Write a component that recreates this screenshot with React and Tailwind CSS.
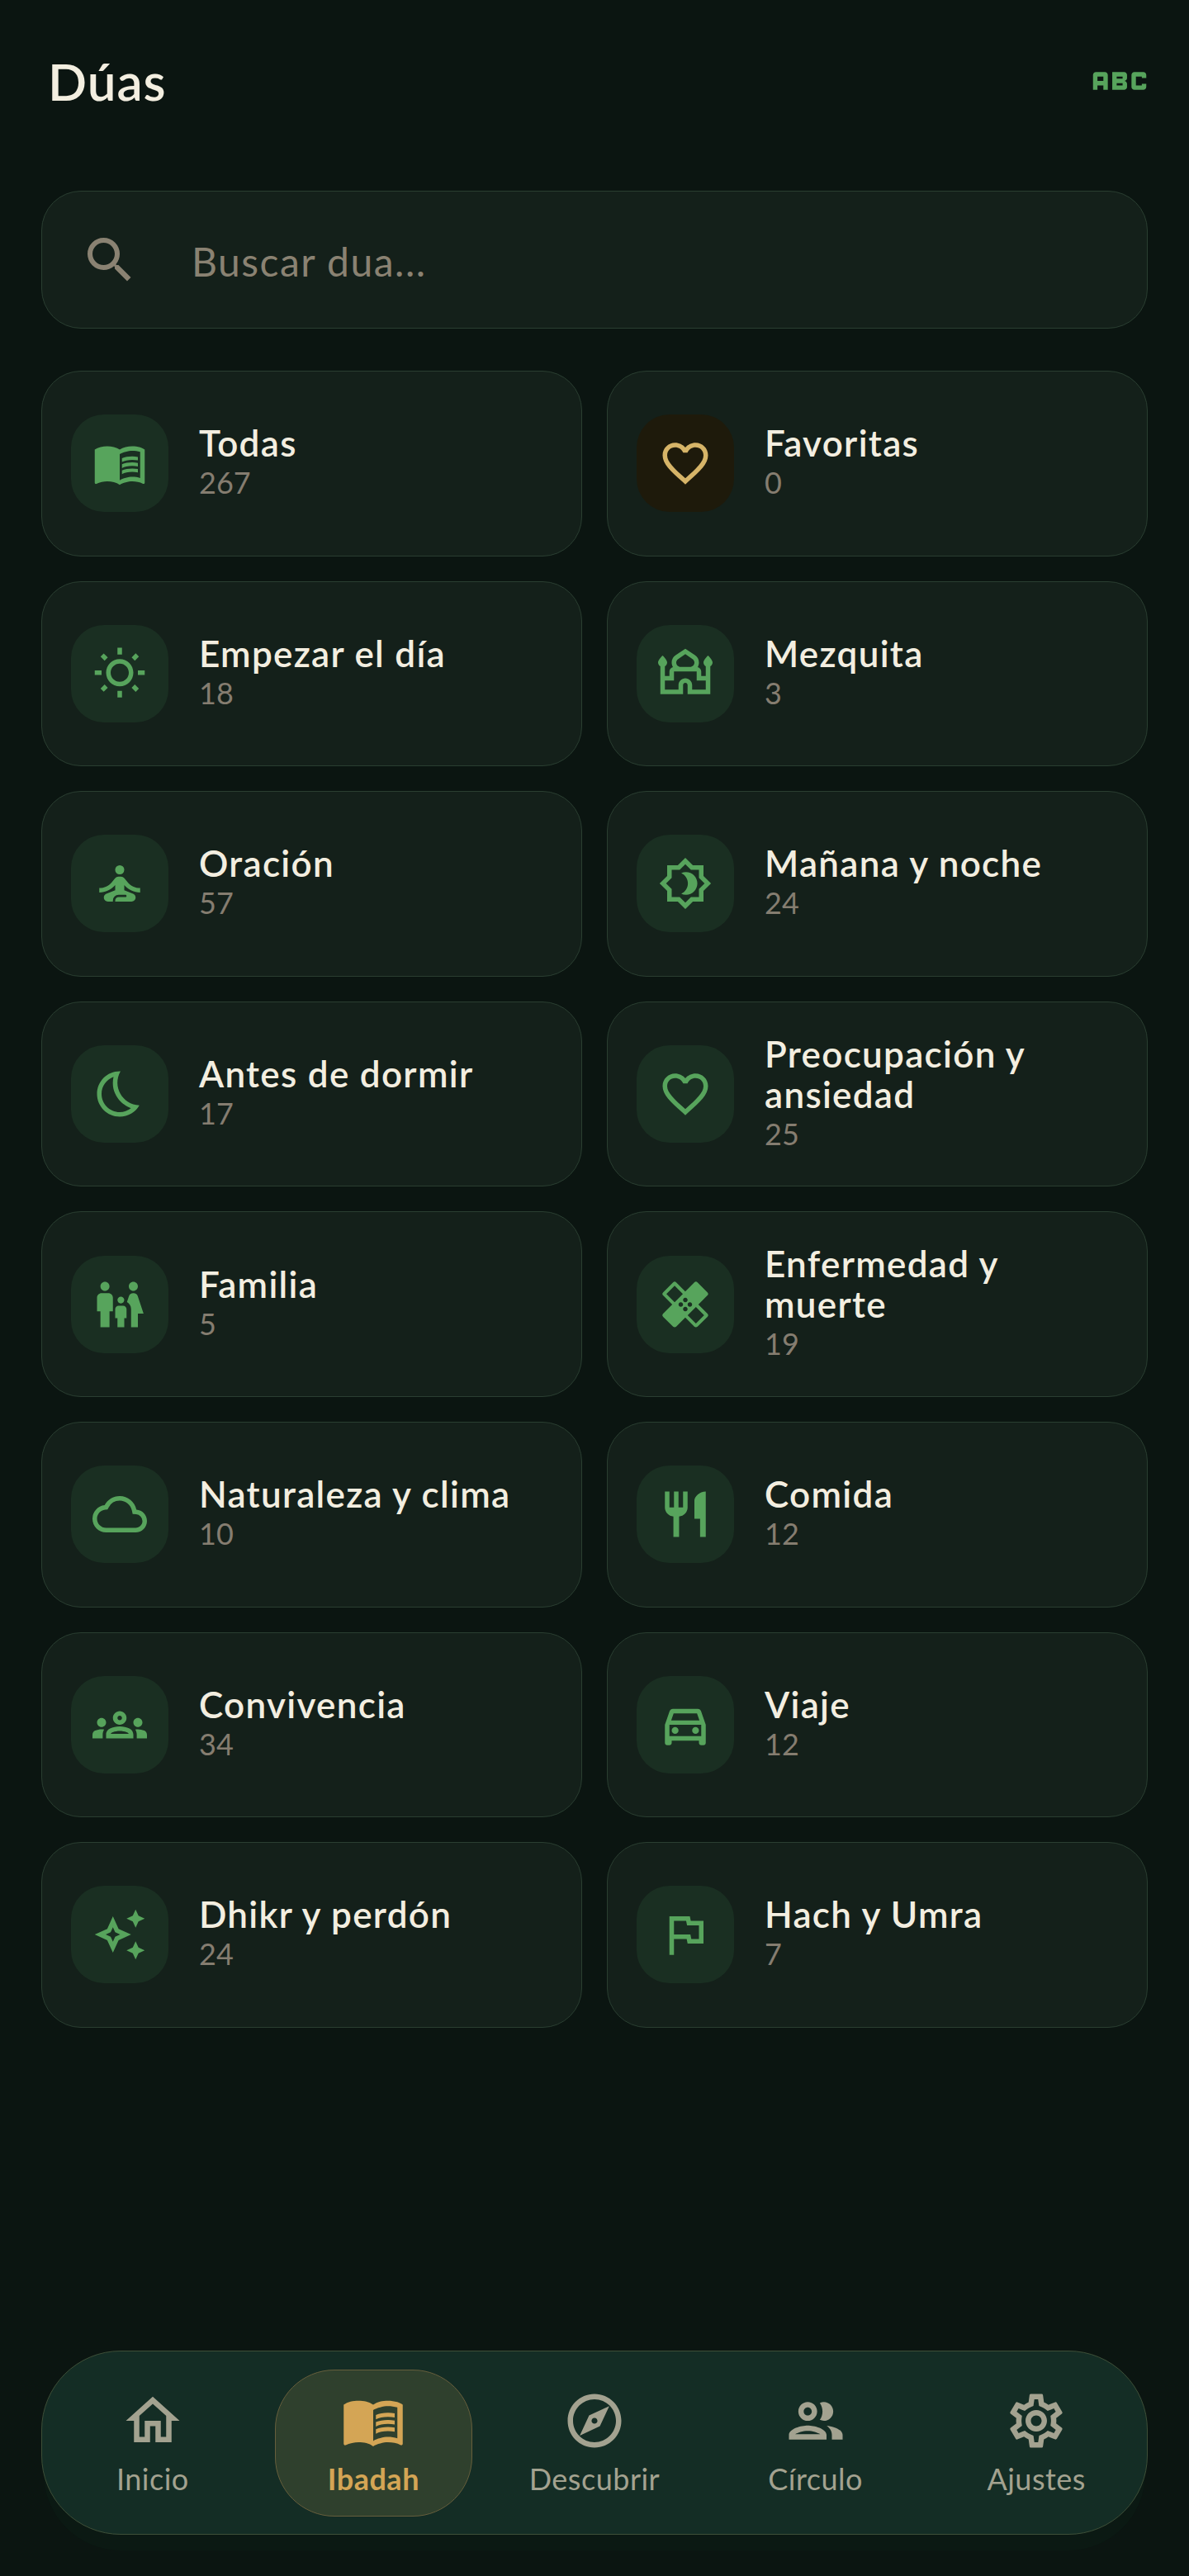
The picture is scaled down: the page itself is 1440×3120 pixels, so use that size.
import {
	MdAbc,
	MdSearch,
	MdMenuBook,
	MdFavoriteBorder,
	MdOutlineWbSunny,
	MdOutlineMosque,
	MdSelfImprovement,
	MdOutlineBrightness4,
	MdOutlineBedtime,
	MdFamilyRestroom,
	MdOutlineHealing,
	MdOutlineCloud,
	MdRestaurant,
	MdOutlineGroups,
	MdOutlineDirectionsCar,
	MdOutlineAutoAwesome,
	MdOutlineFlag,
	MdOutlineHome,
	MdOutlineExplore,
	MdOutlineGroup,
	MdOutlineSettings,
} from 'react-icons/md'

const categories = [
	{ name: 'Todas', count: 267, icon: MdMenuBook },
	{ name: 'Favoritas', count: 0, icon: MdFavoriteBorder, gold: true },
	{ name: 'Empezar el día', count: 18, icon: MdOutlineWbSunny },
	{ name: 'Mezquita', count: 3, icon: MdOutlineMosque },
	{ name: 'Oración', count: 57, icon: MdSelfImprovement },
	{ name: 'Mañana y noche', count: 24, icon: MdOutlineBrightness4 },
	{ name: 'Antes de dormir', count: 17, icon: MdOutlineBedtime },
	{ name: 'Preocupación y ansiedad', count: 25, icon: MdFavoriteBorder },
	{ name: 'Familia', count: 5, icon: MdFamilyRestroom },
	{ name: 'Enfermedad y muerte', count: 19, icon: MdOutlineHealing },
	{ name: 'Naturaleza y clima', count: 10, icon: MdOutlineCloud },
	{ name: 'Comida', count: 12, icon: MdRestaurant },
	{ name: 'Convivencia', count: 34, icon: MdOutlineGroups },
	{ name: 'Viaje', count: 12, icon: MdOutlineDirectionsCar },
	{ name: 'Dhikr y perdón', count: 24, icon: MdOutlineAutoAwesome },
	{ name: 'Hach y Umra', count: 7, icon: MdOutlineFlag },
]

const navItems = [
	{ label: 'Inicio', icon: MdOutlineHome },
	{ label: 'Ibadah', icon: MdMenuBook, active: true },
	{ label: 'Descubrir', icon: MdOutlineExplore },
	{ label: 'Círculo', icon: MdOutlineGroup },
	{ label: 'Ajustes', icon: MdOutlineSettings },
]

const CategoryCard = ({ name, count, icon: Icon, gold }) => {
	return (
		<div className="flex items-center gap-[37px] rounded-[48px] border border-[#2a3e31] bg-[#14201a] pr-[30px] pl-[35px]">
			<div
				className={`flex h-[118px] w-[118px] shrink-0 items-center justify-center rounded-[40px] ${
					gold ? 'bg-[#1e1a0b] text-[#d6b468]' : 'bg-[#1a2f22] text-[#57a45c]'
				}`}
			>
				<Icon size={66} />
			</div>
			<div className="min-w-0 pb-[2px]">
				<h3 className="text-[44px] leading-[49px] font-semibold tracking-[1.3px] text-[#f3eee0]">{name}</h3>
				<p className="text-[36px] leading-[47px] text-[#857d70]">{count}</p>
			</div>
		</div>
	)
}

const NavItem = ({ label, icon: Icon, active }) => {
	return (
		<div
			className={`flex h-[178px] w-[239px] flex-col items-center justify-center gap-[9px] rounded-[72px] border ${
				active ? 'border-[#665e3c] bg-[#2f402d] text-[#d4a555]' : 'border-transparent text-[#a3a290]'
			}`}
		>
			<Icon size={78} />
			<span className={`text-[36px] leading-[44px] tracking-[0.5px] ${active ? 'font-bold' : ''}`}>{label}</span>
		</div>
	)
}

const App = () => {
	return (
		<div className="flex h-[3120px] flex-col bg-[#0b1511] px-[50px] pb-[50px] font-[Lato,sans-serif]">
			<header className="flex h-[196px] shrink-0 items-center justify-between pl-2">
				<h1 className="text-[62px] font-semibold tracking-[1px] text-[#f3eee0]">Dúas</h1>
				<MdAbc size={86} className="-mr-[9px] text-[#57a45c]" />
			</header>

			<div className="mt-[35px] flex h-[167px] shrink-0 items-center gap-9 rounded-[48px] border border-[#2a3e31] bg-[#14201a] pl-[46px]">
				<MdSearch size={72} className="text-[#8a8272]" />
				<span className="pt-[5px] pl-[27px] text-[48px] tracking-[1.5px] text-[#8a8272]">Buscar dua...</span>
			</div>

			<div className="mt-[51px] grid auto-rows-[224.6px] grid-cols-2 gap-[30px]">
				{categories.map((category) => (
					<CategoryCard key={category.name} {...category} />
				))}
			</div>

			<nav className="mt-auto grid h-[223px] shrink-0 grid-cols-5 place-items-center rounded-[96px] border border-[#3e4f38] bg-[#142d25] shadow-[0_22px_0_-3px_#0b1913]">
				{navItems.map((item) => (
					<NavItem key={item.label} {...item} />
				))}
			</nav>
		</div>
	)
}

export default App
